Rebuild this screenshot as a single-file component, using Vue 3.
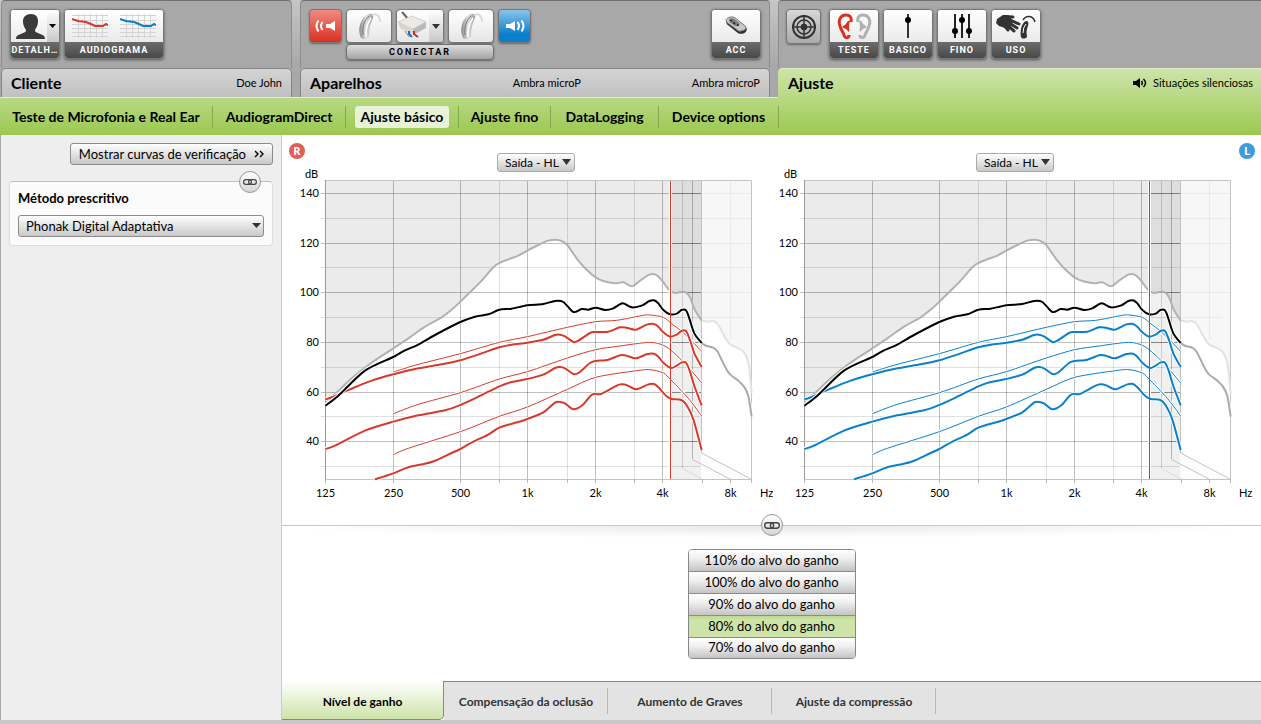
<script setup>
import { ref } from 'vue'

const sections = ['Teste de Microfonia e Real Ear', 'AudiogramDirect', 'Ajuste básico', 'Ajuste fino', 'DataLogging', 'Device options']
const section = ref('Ajuste básico')

const gains = ['110%', '100%', '90%', '80%', '70%']
const gain = ref('80%')

const views = ['Nível de ganho', 'Compensação da oclusão', 'Aumento de Graves', 'Ajuste da compressão']
const view = ref('Nível de ganho')

const sides = [
  { id: 'right', color: '#d8392a' },
  { id: 'left', color: '#0a80cc' }
]

const levels = [140, 120, 100, 80, 60, 40].map((v, i) => ({ v, y: [193.5, 243.5, 292.5, 342.5, 392.5, 441.5][i] }))
const minorY = [218.5, 267.5, 317.5, 367.5, 416.5, 466.5]
const majorX = [393.5, 460.5, 527.5, 595.5, 662.5]
const minorX = [499.5, 567.5, 634.5]
const freqs = [
  ['125', 325.5], ['250', 393.5], ['500', 460.5], ['1k', 527.5], ['2k', 595.5], ['4k', 662.5], ['8k', 730.5]
]
const ticksX = [325.5, ...majorX, ...minorX, 702.5, 730.5, 751.5]

/* Curves are stored in thirds of a chart unit, origin at (285, 140). */
const mpo = [[121, 785], [150, 762], [200, 715], [250, 675], [325, 625], [370, 595], [420, 560], [470, 532], [505, 505], [526, 485], [560, 452], [590, 422], [625, 382], [643, 369], [670, 358], [700, 347], [727, 332], [760, 315], [790, 302], [810, 299], [830, 303], [848, 317], [880, 362], [905, 389], [932, 412], [955, 423], [990, 430], [1015, 427], [1041, 439], [1065, 422], [1093, 404], [1110, 403], [1130, 420], [1150, 447], [1170, 459], [1190, 455], [1203, 457], [1215, 472], [1230, 510], [1250, 542]]
const mpoTail = [[1250, 542], [1270, 545], [1285, 543], [1300, 555], [1320, 592], [1335, 613], [1360, 625], [1377, 637], [1389, 665], [1395, 705], [1400, 760]]
const peak = [[121, 797], [160, 767], [240, 692], [325, 651], [360, 631], [400, 614], [450, 585], [526, 546], [570, 530], [610, 523], [643, 509], [680, 506], [727, 496], [775, 492], [810, 483], [835, 486], [865, 516], [890, 507], [910, 509], [932, 503], [960, 510], [985, 505], [1013, 490], [1040, 502], [1070, 497], [1093, 483], [1107, 481], [1120, 490], [1135, 510], [1155, 523], [1175, 521], [1189, 510], [1203, 511], [1213, 535], [1228, 580], [1250, 609]]
const peakTail = [[1250, 609], [1265, 618], [1285, 623], [1298, 635], [1320, 680], [1335, 703], [1360, 722], [1377, 740], [1390, 768], [1400, 830]]
const thick = [
  [[121, 777], [135, 774], [195, 748], [260, 722], [325, 703], [400, 685], [470, 673], [526, 661], [590, 640], [643, 622], [680, 614], [727, 608], [775, 599], [810, 585], [825, 584], [840, 589], [865, 606], [880, 602], [915, 579], [932, 576], [970, 575], [1005, 562], [1025, 563], [1052, 569], [1085, 554], [1107, 552], [1120, 560], [1135, 577], [1155, 590], [1175, 584], [1189, 573], [1203, 573], [1215, 600], [1228, 640], [1250, 681]],
  [[121, 927], [150, 917], [240, 872], [325, 845], [400, 826], [480, 811], [526, 795], [580, 770], [643, 739], [680, 726], [727, 717], [775, 704], [810, 684], [825, 681], [840, 685], [865, 702], [880, 699], [915, 669], [932, 663], [970, 659], [1005, 646], [1025, 647], [1052, 655], [1085, 643], [1107, 641], [1120, 650], [1135, 668], [1160, 684], [1189, 668], [1203, 668], [1215, 695], [1228, 738], [1250, 796]],
  [[270, 1018], [325, 1000], [370, 982], [440, 966], [500, 939], [526, 927], [565, 905], [610, 884], [643, 863], [700, 846], [727, 837], [775, 817], [810, 788], [825, 786], [840, 790], [865, 808], [892, 796], [917, 767], [930, 761], [948, 762], [995, 737], [1010, 733], [1027, 736], [1055, 748], [1090, 733], [1107, 732], [1120, 742], [1145, 769], [1160, 777], [1189, 780], [1205, 796], [1225, 838], [1250, 930]]
]
const thin = [
  [[325, 696], [400, 673], [526, 641], [643, 607], [727, 590], [847, 562], [932, 545], [995, 541], [1075, 526], [1095, 525], [1135, 532], [1160, 551], [1189, 573], [1220, 603], [1250, 634]],
  [[325, 821], [400, 793], [526, 758], [643, 717], [727, 695], [847, 654], [932, 629], [1005, 618], [1093, 607], [1135, 616], [1165, 637], [1205, 676], [1250, 729]],
  [[325, 944], [370, 925], [526, 875], [643, 829], [727, 801], [847, 748], [932, 712], [1055, 692], [1095, 689], [1135, 699], [1160, 722], [1210, 775], [1250, 828]]
]

function spline(p) {
  let d = `M${p[0]}`
  for (let i = 0; i < p.length - 1; i++) {
    const a = p[i - 1] || p[i]
    const b = p[i]
    const c = p[i + 1]
    const e = p[i + 2] || c
    const k = 7
    d += `C${b[0] + (c[0] - a[0]) / k} ${b[1] + (c[1] - a[1]) / k} ${c[0] - (e[0] - b[0]) / k} ${c[1] - (e[1] - b[1]) / k} ${c}`
  }
  return d
}
const mpoPath = spline(mpo)
const mpoTailPath = spline(mpoTail)
const peakPath = spline(peak)
const peakTailPath = spline(peakTail)
const thickPaths = thick.map(spline)
const thinPaths = thin.map(spline)
</script>

<template>
  <div class="app">
    <header class="top">
      <section class="tools">
        <button class="tile">
          <span class="pic split">
            <svg width="36" height="32" viewBox="0 0 36 32"><path d="M20 4c5 0 7 3 7 7 0 5-2 7-3 9 0 2 1 2 3 3 4 2 7 2 7 6H5c0-4 3-4 7-6 2-1 3-1 3-3-1-2-3-4-3-9 0-4 3-7 8-7z" fill="#3a3a3a" /></svg>
            <i class="drop"><svg width="8" height="5" viewBox="0 0 8 5"><path d="M0 0h7L3.500 4z" fill="#000" /></svg></i>
          </span>
          <span class="cap">DETALH…</span>
        </button>
        <button class="tile wide">
          <span class="pic pair">
            <svg v-for="s in sides" :key="s.id" width="36" height="24" viewBox="0 0 36 24">
              <path d="M0 1.500h36M0 6.500h36M0 10.500h36M0 14.500h36M0 18.500h36M0 22.500h36M6.500 0v24M12.500 0v24M18.500 0v24M24.500 0v24M30.500 0v24" stroke="#d4d4d4" fill="none" />
              <path d="M0 5l6 2 8 1 5 2 4 2h8l3-2 2 1" fill="none" :stroke="s.color" stroke-width="2" />
            </svg>
          </span>
          <span class="cap">AUDIOGRAMA</span>
        </button>
      </section>

      <section class="tools">
        <button class="square red" aria-label="Direito">
          <svg width="24" height="16" viewBox="0 0 24 16"><path d="M21 3v10l-5-3h-4V6h4z" fill="#fff" /><path d="M8.500 4Q5.500 8 8.500 12M4.500 2.500Q.5 8 4.500 13.500" fill="none" stroke="#fff" stroke-width="2" /></svg>
        </button>
        <div class="connect">
          <div class="devices">
            <button class="square device" aria-label="Aparelho direito">
              <svg width="26" height="28" viewBox="0 0 26 28"><use href="#aid" /></svg>
            </button>
            <button class="square box" aria-label="Interface">
              <svg width="32" height="30" viewBox="0 0 32 30">
                <path d="M5 1l7 8" stroke="#666" stroke-width="2" /><path d="M1 11l14-6 14 6-13 7z" fill="#eceae5" stroke="#d4d2cc" /><path d="M1 11l15 7v6L3 17z" fill="#d6d4cf" /><path d="M16 18l13-7v6l-13 7z" fill="#b8babd" />
                <path d="M12 20v3l3 3" stroke="#2b6cb0" stroke-width="2" fill="none" /><path d="M17 20v3l4 3" stroke="#c02e2e" stroke-width="2" fill="none" /><path d="M8 20l4 6" stroke="#888" fill="none" />
              </svg>
              <i class="drop"><svg width="8" height="5" viewBox="0 0 8 5"><path d="M0 0h8L4 5z" fill="#333" /></svg></i>
            </button>
            <button class="square device" aria-label="Aparelho esquerdo">
              <svg width="26" height="28" viewBox="0 0 26 28"><use href="#aid" /></svg>
            </button>
          </div>
          <button class="conectar">CONECTAR</button>
        </div>
        <button class="square blue" aria-label="Esquerdo">
          <svg width="24" height="16" viewBox="0 0 24 16"><path d="M12 3v10l-5-3H3V6h4z" fill="#fff" /><path d="M14.500 4q3 4 0 8M18.500 2.500q4 5.500 0 11" fill="none" stroke="#fff" stroke-width="2" /></svg>
        </button>
        <button class="tile push">
          <span class="pic">
            <svg width="26" height="20" viewBox="0 0 28 22"><path d="M3 6c3-5 8-5 10-4l11 9c3 3 2 6-1 8-3 1-6 1-8-1L4 9z" fill="#333" /><path d="M3 4c2-3 7-4 10-2l11 9c2 2 0 5-3 5-2 1-4 1-6-1L4 7z" fill="#c9c9c9" stroke="#777" /><path d="M6 4c1-2 4-2 6-1l6 5c1 2-3 4-5 3L7 7z" fill="#7b7f86" /><path d="M8 5h2M11 8h2M15 10h2" stroke="#222" stroke-width="2" /></svg>
          </span>
          <span class="cap">ACC</span>
        </button>
      </section>

      <section class="tools last">
        <button class="square target" aria-label="Alvo">
          <svg width="26" height="26" viewBox="0 0 26 26" fill="none" stroke="#333"><circle cx="13" cy="13" r="11" stroke-width="2" /><circle cx="13" cy="13" r="7" stroke-width="1.500" /><circle cx="13" cy="13" r="3" fill="#333" /><path d="M13 1v24M1 13h24" stroke-width="1.500" /></svg>
        </button>
        <button class="tile">
          <span class="pic ears">
            <svg width="16" height="27" viewBox="0 0 16 27"><use href="#ear" color="#d9301f" /></svg>
            <svg width="16" height="27" viewBox="0 0 16 27"><use href="#ear" color="#b0b0b0" transform="matrix(-1 0 0 1 16 0)" /></svg>
          </span>
          <span class="cap">TESTE</span>
        </button>
        <button class="tile">
          <span class="pic"><svg width="10" height="26" viewBox="0 0 10 26"><path d="M5 1v24" stroke="#333" stroke-width="2" /><circle cx="5" cy="7" r="3" /></svg></span>
          <span class="cap">BASICO</span>
        </button>
        <button class="tile">
          <span class="pic"><svg width="22" height="26" viewBox="0 0 22 26"><path d="M4 1v24M11 1v24M18 1v24" stroke="#222" stroke-width="2" /><circle cx="4" cy="18" r="3" /><circle cx="11" cy="7" r="3" /><circle cx="18" cy="18" r="3" /></svg></span>
          <span class="cap">FINO</span>
        </button>
        <button class="tile">
          <span class="pic">
            <svg width="42" height="28" viewBox="0 0 42 28">
              <path d="M2 7l6-4h5l5 6-2 6-6 1-6-2-3-3z" fill="#333" />
              <path d="M9 4.500l9 .5M13 7l11 5M13 10l9 6M11 12l8 7M8 12l5 6" fill="none" stroke="#333" stroke-width="3" stroke-linecap="round" />
              <path d="M26 25c-1-5 0-14 5-16 4 0 2 5 1 8-1 4 0 6 0 8-2 2-5 2-6 0z" fill="#333" /><path d="M28 8c3-5 10-5 12 2" fill="none" stroke="#333" stroke-width="1.500" /><path d="M28 21q0-6 3-9" fill="none" stroke="#fff" />
            </svg>
          </span>
          <span class="cap">USO</span>
        </button>
      </section>

      <div class="head"><h2>Cliente</h2><span>Doe John</span></div>
      <div class="head devs"><h2>Aparelhos</h2><span>Ambra microP</span><span>Ambra microP</span></div>
      <div class="head current">
        <h2>Ajuste</h2>
        <span class="program"><svg width="14" height="10" viewBox="0 0 14 10"><path d="M0 3h3l4-3v10L3 7H0z" /><path d="M8.500 3q1.500 2 0 4M10.500 1q4 4 0 8" fill="none" stroke="#000" stroke-width="1.500" /></svg>Situações silenciosas</span>
      </div>
    </header>

    <nav class="nav">
      <div v-for="s in sections" :key="s" class="item">
        <a href="#" :class="{ on: s === section }" @click.prevent="section = s">{{ s }}</a>
      </div>
    </nav>

    <div class="body">
      <aside class="side">
        <button class="verify">Mostrar curvas de verificação <svg width="10" height="8" viewBox="0 0 10 8"><path d="M1 1l3 3-3 3M6 1l3 3-3 3" fill="none" stroke="#111" stroke-width="1.500" /></svg></button>
        <div class="card">
          <button class="link corner" aria-label="Vincular"><svg width="14" height="6" viewBox="0 0 14 6"><use href="#chain" /></svg></button>
          <label for="method">Método prescritivo</label>
          <div class="pick">
            <select id="method"><option>Phonak Digital Adaptativa</option></select>
            <svg width="9" height="6" viewBox="0 0 9 6"><path d="M0 0h9L4.500 5z" fill="#333" /></svg>
          </div>
        </div>
      </aside>

      <main class="main">
        <div class="charts">
          <span class="badge r">R</span>
          <span class="badge l">L</span>
          <div v-for="s in sides" :key="s.id" class="chart">
            <div class="pick small">
              <select :aria-label="'Curva ' + s.id"><option>Saída - HL</option></select>
              <svg width="9" height="6" viewBox="0 0 9 6"><path d="M0 0h9L4.500 6z" fill="#333" /></svg>
            </div>
            <svg class="plot" viewBox="293 172 479 333">
              <defs>
                <clipPath :id="s.id + 'Band'"><rect x="671" y="181" width="30" height="298" /></clipPath>
              </defs>
              <rect x="671" y="181" width="30" height="298" fill="#f0f0f0" />
              <g transform="translate(285 140) scale(.33333)">
                <path :d="mpoPath + 'V123H121z'" fill="#ebebeb" />
                <path :d="mpoTailPath + 'V123H1250z'" fill="#f7f7f7" />
              </g>
              <g :clip-path="`url(#${s.id}Band)`">
                <path transform="translate(285 140) scale(.33333)" :d="mpoPath + 'V123H121z'" fill="#dedede" />
              </g>
              <path d="M701 454l50 25h-50z" fill="#fdfdfd" />

              <g stroke="#000" stroke-opacity=".12">
                <path v-for="y in minorY" :key="y" :d="`M321 ${y}H701`" />
                <path v-for="x in minorX" :key="x" :d="`M${x} 181V479`" />
              </g>
              <g stroke="#000" stroke-opacity=".25">
                <path v-for="l in levels" :key="l.v" :d="`M321 ${l.y}H701`" />
                <path v-for="x in majorX" :key="x" :d="`M${x} 181V479`" />
                <path v-for="l in levels" :key="'b' + l.v" :d="`M671 ${l.y}H701`" />
                <path d="M692.500 181V459" /><path d="M682.500 181V468" stroke-opacity=".15" />
              </g>
              <g stroke="#000" stroke-opacity=".05">
                <path d="M701 193.500H751M701 218.500H751M701 243.500H751M701 267.500H751M701 292.500H751M701 317.500H743M730.500 181V340" />
              </g>
              <path d="M701.500 181V453" stroke="#c0c0c0" />
              <path d="M701.500 453L751 479M692.500 459.500L730 479" stroke="#c4c4c4" fill="none" />
              <path d="M682.500 468.500L702 479" stroke="#dcdcdc" />
              <path d="M325.500 180.500H751.500V479.500H325.500" stroke="#c4c4c4" fill="none" />
              <path d="M325.500 180V483" stroke="#999" />
              <path v-for="x in ticksX" :key="x" :d="`M${x} 479V483`" stroke="#bbb" />

              <path transform="translate(285 140) scale(.33333)" :d="mpoPath" stroke="#b2b2b2" stroke-width="6" fill="none" />
              <path d="M670.500 181V479" stroke="#fff" stroke-width="3" />
              <g transform="translate(285 140) scale(.33333)" fill="none" stroke-linejoin="round">
                <path :d="mpoTailPath" stroke="#e2e2e2" stroke-width="6" />
                <path :d="peakTailPath" stroke="#fff" stroke-width="11" />
                <path :d="peakTailPath" stroke="#ababab" stroke-width="6" />
                <g v-for="(p, i) in thinPaths" :key="i">
                  <path :d="p" stroke="#fff" stroke-width="9" />
                  <path :d="p" :stroke="s.color" stroke-width="3" />
                </g>
                <g v-for="(p, i) in thickPaths" :key="i">
                  <path :d="p" stroke="#fff" stroke-width="11" />
                  <path :d="p" :stroke="s.color" stroke-width="6" />
                </g>
                <path :d="peakPath" stroke="#fff" stroke-width="12" />
                <path :d="peakPath" stroke="#000" stroke-width="6" />
              </g>
              <path d="M670.500 181V479" :stroke="s.color" />

              <g class="ticks">
                <text x="305" y="178">dB</text>
                <text v-for="l in levels" :key="l.v" x="319" :y="l.y + 3.500" text-anchor="end">{{ l.v }}</text>
                <text v-for="f in freqs" :key="f[0]" :x="f[1]" y="497" text-anchor="middle">{{ f[0] }}</text>
                <text x="760" y="497">Hz</text>
              </g>
            </svg>
          </div>
        </div>

        <div class="gain">
          <button class="link mid" aria-label="Vincular"><svg width="16" height="7" viewBox="0 0 14 6"><use href="#chain" /></svg></button>
          <div class="list">
            <button v-for="g in gains" :key="g" :class="{ on: g === gain }" @click="gain = g">{{ g }} do alvo do ganho</button>
          </div>
        </div>

        <nav class="views">
          <a v-for="v in views" :key="v" href="#" :class="{ on: v === view }" @click.prevent="view = v">{{ v }}</a>
          <span class="rest"></span>
        </nav>
      </main>
    </div>

    <svg class="defs" width="0" height="0" aria-hidden="true">
      <defs>
        <linearGradient id="metal" x1="0" x2="1"><stop offset="0" stop-color="#8a8a8a" /><stop offset=".5" stop-color="#e0e0e0" /><stop offset="1" stop-color="#999" /></linearGradient>
        <g id="aid"><path d="M5 26C1 18 4 5 13 2c3-1 5 1 4 4-3 6-4 12-4 18-1 3-6 4-8 2z" fill="url(#metal)" /><path d="M7 23C6 16 8 8 13 4" fill="none" stroke="#777" /><path d="M10 25c-1-7 1-13 5-19" fill="none" stroke="#fff" stroke-width="1.500" /><path d="M16 3c5-2 8 1 8 7" fill="none" stroke="#dcdcdc" stroke-width="2" /></g>
        <g id="ear"><path d="M14 9C15 3 12 2 9 2 3 2 1 8 3 13c1 4 3 6 4 9 1 4 5 3 5 0" fill="none" stroke="currentColor" stroke-width="3" /><path d="M13 8c-2-1-3 1-4 3l-4 3c2 2 4 1 5 3l2 2c1-3-1-5 1-11z" fill="currentColor" /></g>
        <g id="chain" fill="none" stroke="#444" stroke-width="1.200"><rect x=".6" y=".6" width="7.800" height="4.800" rx="2.400" /><rect x="5.600" y=".6" width="7.800" height="4.800" rx="2.400" /></g>
      </defs>
    </svg>
  </div>
</template>

<style>
body { margin: 0; background: #eee; }
</style>

<style scoped>
* { box-sizing: border-box; }
.app { min-height: 100vh; display: flex; flex-direction: column; font: 13px/16px Lato, "Open Sans", sans-serif; color: #000; }
button, select { font: inherit; color: inherit; margin: 0; padding: 0; cursor: pointer; }
a { color: inherit; text-decoration: none; }
svg { display: block; }
.defs { position: absolute; }

.top { display: grid; grid-template-columns: 291fr 470fr 483fr; grid-template-rows: 68px 29px; column-gap: 8px; padding-left: 1px; background: linear-gradient(#c6c6c6, #a8a8a8 66px); }
.tools { display: flex; align-items: flex-start; gap: 4px; padding: 8px 8px 0; background: #a8a8a8; border: 1px solid; border-color: #707070 #8e8e8e transparent; border-bottom: 0; border-radius: 4px 4px 0 0; }
.last { border-right: 0; border-radius: 4px 0 0 0; padding-left: 7px; }
.tile { width: 50px; height: 50px; display: flex; flex-direction: column; border: 1px solid #777; border-radius: 4px; overflow: hidden; background: #fff; box-shadow: 0 1px 3px #555; }
.wide { width: 100px; }
.push { margin-left: auto; }
.pic { flex: 1; width: 100%; display: flex; align-items: center; justify-content: center; background: linear-gradient(#fff, #eaeaea); }
.pair { gap: 12px; }
.ears { gap: 3px; }
.split { justify-content: flex-start; }
.drop { align-self: stretch; flex: 1; display: flex; align-items: center; justify-content: center; background: linear-gradient(#fff, #c8c8c8); }
.cap { width: 100%; height: 16px; background: linear-gradient(#6c6c6c, #484848); color: #fff; font: bold 9px/16px Roboto, sans-serif; letter-spacing: 1px; white-space: nowrap; text-align: center; }
.square { width: 33px; height: 34px; display: flex; align-items: center; justify-content: center; border: 1px solid #777; border-radius: 4px; overflow: hidden; box-shadow: 0 1px 2px #666; }
.red { background: linear-gradient(#f08a82, #d9301f); }
.blue { background: linear-gradient(#8cc4ea, #0a80cc 75%); }
.device { width: 46px; background: linear-gradient(#fff, #e6e6e6); }
.box { width: 48px; background: linear-gradient(#fff, #e6e6e6); }
.connect { display: flex; flex-direction: column; gap: 1px; }
.devices { display: flex; gap: 4px; }
.conectar { height: 16px; border: 1px solid #707070; border-radius: 4px; background: linear-gradient(#dedede, #a4a4a4); box-shadow: 0 1px 2px #666; font: bold 9px/13px Roboto, sans-serif; letter-spacing: 2px; }
.target { width: 35px; height: 35px; margin-right: 4px; background: linear-gradient(#d8d8d8, #aaa); }

.head { display: flex; align-items: center; justify-content: space-between; padding: 0 9px 1px; font-size: 11px; border: 1px solid #858585; border-bottom: 0; border-radius: 5px 5px 0 0; background: linear-gradient(#d4d4d4, #c0c0c0); }
.head h2 { margin: 0; font: bold 16px/20px Lato, sans-serif; }
.devs { display: grid; grid-template-columns: 7fr 6fr 6fr; }
.devs span { text-align: center; }
.devs span:last-child { text-align: right; }
.current { margin-bottom: -1px; position: relative; border: 0; border-top: 1px solid #e0efc8; border-radius: 5px 0 0 0; background: linear-gradient(#cde4a8, #b8d983); padding: 0 8px 2px 10px; }
.program { display: flex; align-items: center; gap: 6px; }

.nav { display: grid; grid-template-columns: 213px 133px 113px 92px 108px 120px; height: 38px; border-top: 1px solid #e0efc8; background: linear-gradient(#b8d983, #9bc850); font: bold 14px/22px Lato, sans-serif; align-items: center; }
.item { text-align: center; white-space: nowrap; border-right: 1px solid #86a850; height: 22px; }
.item a { display: inline-block; }
.item .on { padding: 0 6px; background: #e7f2d6; border-radius: 3px; }

.body { flex: 1; display: flex; border-bottom: 4px solid #c8c8c8; }
.side { width: 282px; flex: none; padding: 8px; background: #eee; border-left: 1px solid #aaa; border-right: 1px solid #ccc; display: flex; flex-direction: column; }
.verify { align-self: flex-end; height: 22px; padding: 0 8px; display: flex; align-items: center; gap: 8px; border: 1px solid #8c8c8c; border-radius: 3px; background: linear-gradient(#fff, #c8c8c8); white-space: nowrap; }
.card { position: relative; margin-top: 16px; padding: 8px; height: 65px; border: 1px solid #dedede; border-top-color: #c0c0c0; border-radius: 4px; background: #fbfbfb; display: flex; flex-direction: column; gap: 8px; }
.card label { font-weight: bold; line-height: 17px; }
.link { width: 22px; height: 22px; border: 1px solid #999; border-radius: 50%; background: linear-gradient(#fff, #d4d4d4); display: flex; align-items: center; justify-content: center; }
.corner { position: absolute; right: 11px; top: -11px; }
.pick { position: relative; }
.pick select { appearance: none; width: 100%; height: 22px; padding: 0 7px; border: 1px solid #8c8c8c; border-radius: 3px; background: linear-gradient(#fff, #c8c8c8); }
.pick svg { position: absolute; right: 3px; top: 8px; pointer-events: none; }

.main { flex: 1; min-width: 0; background: #fff; display: flex; flex-direction: column; }
.charts { position: relative; display: flex; padding: 18px 10px 20px 11px; border-bottom: 1px solid #c8c8c8; }
.chart { flex: 1; min-width: 0; display: flex; flex-direction: column; align-items: center; }
.small { margin-left: 7px; width: 78px; }
.small select { height: 19px; font-size: 12px; border-color: #aaa; display: block; }
.small svg { right: 4px; top: 6px; }
.plot { width: 100%; overflow: visible; }
.ticks { font-size: 11px; }
.badge { position: absolute; top: 8px; width: 16px; height: 16px; border-radius: 50%; color: #fff; font: bold 11px/16px "Open Sans", sans-serif; text-align: center; }
.r { left: 7px; background: #e06055; }
.l { right: 6px; background: #3f9bdc; }
.gain { position: relative; flex: 1; display: flex; flex-direction: column; align-items: center; padding-top: 23px; background: radial-gradient(ellipse 50% 12px at top, #e8e8e8, #fff); }
.mid { position: absolute; top: -12px; }
.list { width: 168px; display: flex; flex-direction: column; border: 1px solid #888; border-radius: 4px; overflow: hidden; }
.list button { height: 22px; padding-bottom: 2px; border: 0; border-bottom: 1px solid #8c8c8c; background: linear-gradient(#fff, #f0f0f0 40%, #c4c4c4); }
.list button:last-child { border-bottom: 0; height: 20px; }
.list .on { background: linear-gradient(#bcdb8a, #cde3a8 20%); }
.views { display: flex; height: 39px; font-weight: bold; font-size: 12px; color: #333; }
.views a { width: 164px; flex: none; display: flex; align-items: center; justify-content: center; background: #e3e3e3; border-top: 1px solid #888; padding-top: 2px; position: relative; }
.views a::after { content: ""; position: absolute; right: 0; top: 6px; bottom: 6px; width: 1px; background: #b8b8b8; }
.views .on { width: 162px; padding-top: 4px; color: #000; background: linear-gradient(#fff, #cde3a8); border: 1px solid #888; border-top: 0; border-left: 0; border-radius: 0 0 5px 0; }
.views .on::after { display: none; }
.rest { flex: 1; background: #e3e3e3; border-top: 1px solid #888; }
</style>
